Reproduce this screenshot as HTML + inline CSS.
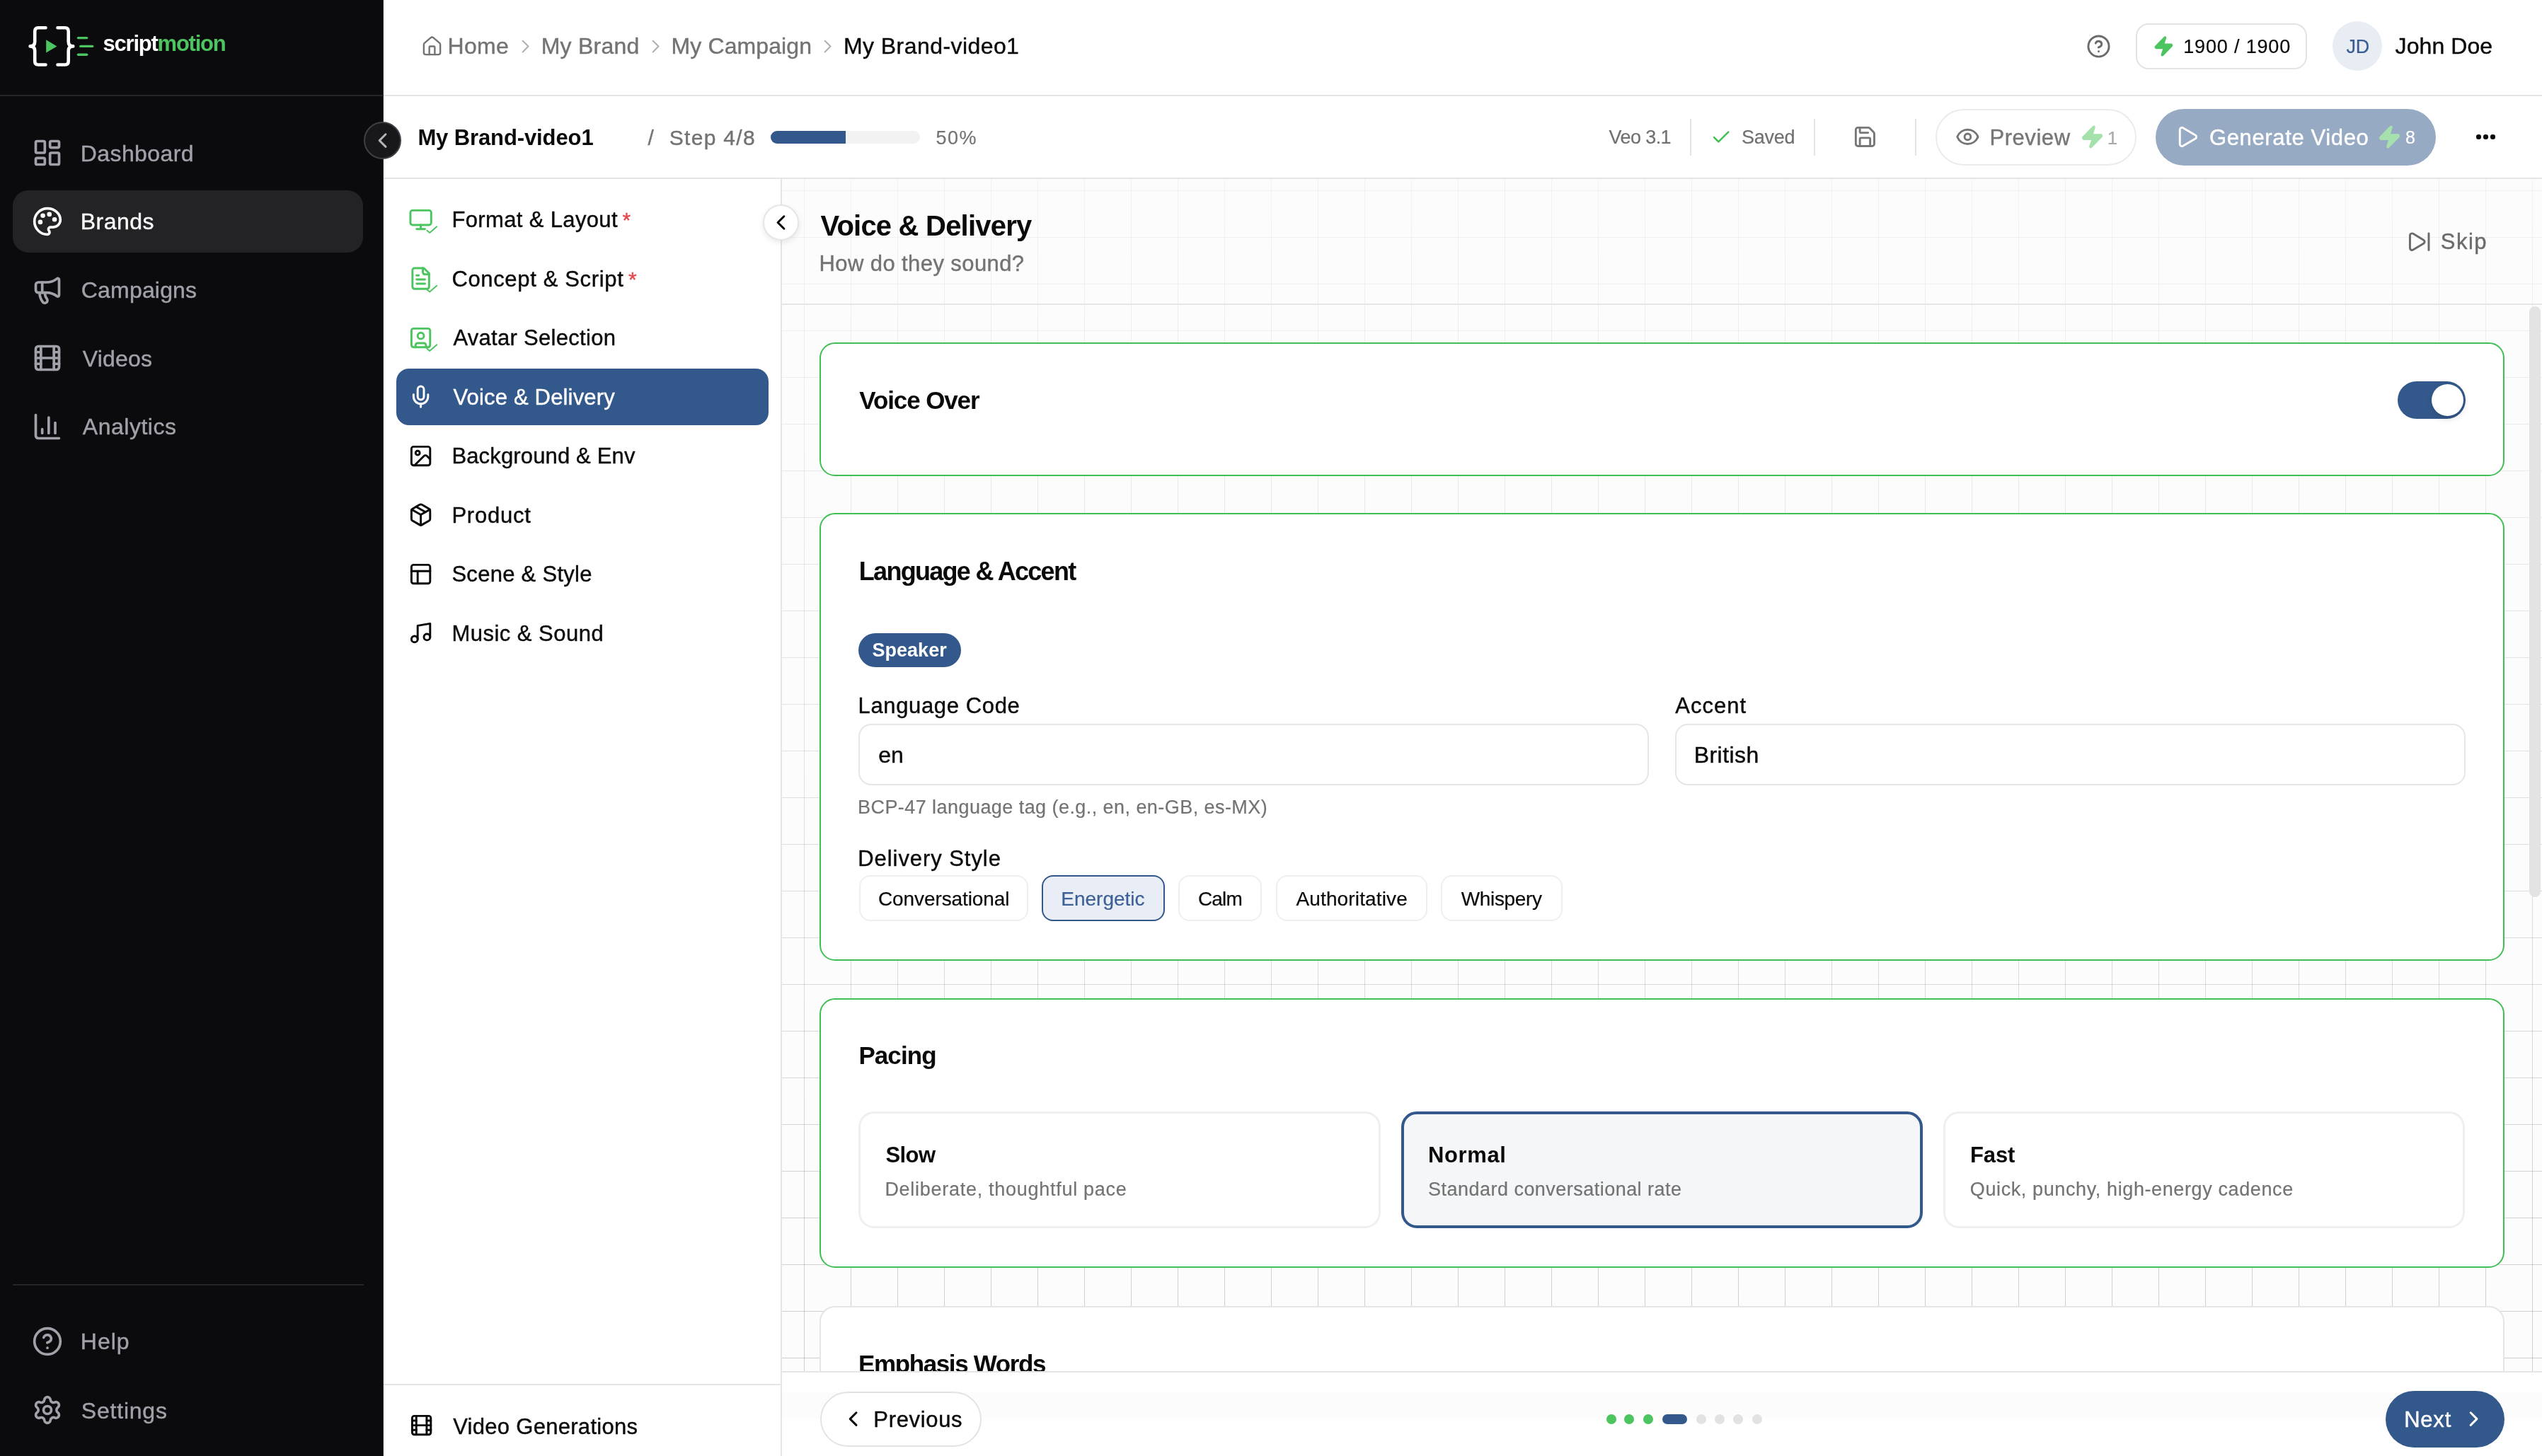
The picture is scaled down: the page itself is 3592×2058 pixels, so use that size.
<!DOCTYPE html>
<html><head><meta charset="utf-8"><style>
html,body{margin:0;padding:0;width:3592px;height:2058px;overflow:hidden;background:#fff;}
body{position:relative;font-family:"Liberation Sans",sans-serif;will-change:transform;}
.t{position:absolute;line-height:1;white-space:nowrap;-webkit-text-stroke:0.4px currentColor;}
.t.s{-webkit-text-stroke:0.2px currentColor}
.t.b{-webkit-text-stroke:0}
svg{display:block}
</style></head><body>
<div style="position:absolute;left:0px;top:0px;width:542px;height:2058px;background:#0b0b0d"></div>
<div style="position:absolute;left:0px;top:134px;width:542px;height:2px;background:#26262a"></div>
<div style="position:absolute;left:541px;top:0px;width:1px;height:2058px;background:#2e2e33"></div>
<svg style="position:absolute;left:0;top:0" width="340" height="120" viewBox="0 0 340 120">
<g fill="none" stroke="#fff" stroke-width="4.6" stroke-linecap="round" stroke-linejoin="round">
<path d="M64.5 39.3 H54 Q49.2 39.3 49.2 44.5 V59 Q49.2 65.4 42.6 65.4 Q49.2 65.4 49.2 71.8 V86.3 Q49.2 91.5 54 91.5 H64.5"/>
<path d="M81.5 39.3 H92 Q96.7 39.3 96.7 44.5 V59 Q96.7 65.4 103.3 65.4 Q96.7 65.4 96.7 71.8 V86.3 Q96.7 91.5 92 91.5 H81.5"/>
</g>
<path d="M65.2 56.3 L80.5 65.4 L65.2 74.6 Z" fill="#4cc45f"/>
<g stroke="#4cc45f" stroke-width="3.4" stroke-linecap="round">
<path d="M110.5 53.6 H122.7"/><path d="M113.7 65.4 H130.7"/><path d="M110.5 77.2 H122.7"/>
</g></svg>
<div class="t b" style="left:145.6px;top:46px;font-size:31px;color:#ffffff;font-weight:700;letter-spacing:-1.24px;">script<span style="color:#4cc45f">motion</span></div>
<div style="position:absolute;left:18px;top:269px;width:495px;height:88px;background:#232325;border-radius:22px"></div>
<svg style="position:absolute;left:45px;top:194.0px;overflow:visible;color:#a1a1aa;" width="44" height="44" viewBox="0 0 24 24" fill="none" stroke="#a1a1aa" stroke-width="2" stroke-linecap="round" stroke-linejoin="round"><rect width="7" height="9" x="3" y="3" rx="1"/><rect width="7" height="5" x="14" y="3" rx="1"/><rect width="7" height="9" x="14" y="12" rx="1"/><rect width="7" height="5" x="3" y="16" rx="1"/></svg>
<div class="t" style="left:113.8px;top:201px;font-size:32px;color:#a1a1aa;letter-spacing:0.40px;">Dashboard</div>
<svg style="position:absolute;left:45px;top:290.8px;overflow:visible;color:#fafafa;" width="44" height="44" viewBox="0 0 24 24" fill="none" stroke="#fafafa" stroke-width="2" stroke-linecap="round" stroke-linejoin="round"><circle cx="13.5" cy="6.5" r=".8" fill="currentColor"/><circle cx="17.5" cy="10.5" r=".8" fill="currentColor"/><circle cx="8.5" cy="7.5" r=".8" fill="currentColor"/><circle cx="6.5" cy="12.5" r=".8" fill="currentColor"/><path d="M12 2C6.5 2 2 6.5 2 12s4.5 10 10 10c.926 0 1.648-.746 1.648-1.688 0-.437-.18-.835-.437-1.125-.29-.289-.438-.652-.438-1.125a1.64 1.64 0 0 1 1.668-1.668h1.996c3.051 0 5.555-2.503 5.555-5.554C21.965 6.012 17.461 2 12 2z"/></svg>
<div class="t" style="left:113.8px;top:297px;font-size:32px;color:#fafafa;letter-spacing:0.46px;">Brands</div>
<svg style="position:absolute;left:45px;top:387.5px;overflow:visible;color:#a1a1aa;" width="44" height="44" viewBox="0 0 24 24" fill="none" stroke="#a1a1aa" stroke-width="2" stroke-linecap="round" stroke-linejoin="round"><path d="M11 6a13 13 0 0 0 8.4-2.8A1 1 0 0 1 21 4v12a1 1 0 0 1-1.6.8A13 13 0 0 0 11 14H5a2 2 0 0 1-2-2V8a2 2 0 0 1 2-2z"/><path d="M6 14a12 12 0 0 0 2.4 7.2 2 2 0 0 0 3.2-2.4A8 8 0 0 1 10 14"/><path d="M8 6v8"/></svg>
<div class="t" style="left:114.8px;top:394px;font-size:32px;color:#a1a1aa;letter-spacing:0.18px;">Campaigns</div>
<svg style="position:absolute;left:45px;top:484.2px;overflow:visible;color:#a1a1aa;" width="44" height="44" viewBox="0 0 24 24" fill="none" stroke="#a1a1aa" stroke-width="2" stroke-linecap="round" stroke-linejoin="round"><rect width="18" height="18" x="3" y="3" rx="2"/><path d="M7 3v18"/><path d="M3 7.5h4"/><path d="M3 12h18"/><path d="M3 16.5h4"/><path d="M17 3v18"/><path d="M17 7.5h4"/><path d="M17 16.5h4"/></svg>
<div class="t" style="left:116.8px;top:491px;font-size:32px;color:#a1a1aa;letter-spacing:0.18px;">Videos</div>
<svg style="position:absolute;left:45px;top:581.0px;overflow:visible;color:#a1a1aa;" width="44" height="44" viewBox="0 0 24 24" fill="none" stroke="#a1a1aa" stroke-width="2" stroke-linecap="round" stroke-linejoin="round"><path d="M3 3v16a2 2 0 0 0 2 2h16"/><path d="M18 17V9"/><path d="M13 17V5"/><path d="M8 17v-3"/></svg>
<div class="t" style="left:116.8px;top:587px;font-size:32px;color:#a1a1aa;letter-spacing:0.51px;">Analytics</div>
<div style="position:absolute;left:18px;top:1815px;width:496px;height:2px;background:#26262a"></div>
<svg style="position:absolute;left:45px;top:1874px;overflow:visible;color:#a1a1aa;" width="44" height="44" viewBox="0 0 24 24" fill="none" stroke="#a1a1aa" stroke-width="2" stroke-linecap="round" stroke-linejoin="round"><circle cx="12" cy="12" r="10"/><path d="M9.09 9a3 3 0 0 1 5.83 1c0 2-3 3-3 3"/><path d="M12 17h.01"/></svg>
<div class="t" style="left:113.8px;top:1880px;font-size:32px;color:#a1a1aa;letter-spacing:1.00px;">Help</div>
<svg style="position:absolute;left:45px;top:1971px;overflow:visible;color:#a1a1aa;" width="44" height="44" viewBox="0 0 24 24" fill="none" stroke="#a1a1aa" stroke-width="2" stroke-linecap="round" stroke-linejoin="round"><path d="M9.671 4.136a2.34 2.34 0 0 1 4.659 0 2.34 2.34 0 0 0 3.319 1.915 2.34 2.34 0 0 1 2.33 4.033 2.34 2.34 0 0 0 0 3.831 2.34 2.34 0 0 1-2.33 4.033 2.34 2.34 0 0 0-3.319 1.915 2.34 2.34 0 0 1-4.659 0 2.34 2.34 0 0 0-3.32-1.915 2.34 2.34 0 0 1-2.33-4.033 2.34 2.34 0 0 0 0-3.831A2.34 2.34 0 0 1 6.35 6.051a2.34 2.34 0 0 0 3.319-1.915"/><circle cx="12" cy="12" r="3"/></svg>
<div class="t" style="left:114.8px;top:1978px;font-size:32px;color:#a1a1aa;letter-spacing:0.79px;">Settings</div>
<div style="position:absolute;left:542px;top:0px;width:3050px;height:134px;background:#fff"></div>
<div style="position:absolute;left:542px;top:134px;width:3050px;height:2px;background:#e5e5e5"></div>
<svg style="position:absolute;left:594.8px;top:50.2px;overflow:visible;color:#737373;" width="31" height="31" viewBox="0 0 24 24" fill="none" stroke="#737373" stroke-width="1.85" stroke-linecap="round" stroke-linejoin="round"><path d="M15 21v-8a1 1 0 0 0-1-1h-4a1 1 0 0 0-1 1v8"/><path d="M3 10a2 2 0 0 1 .709-1.528l7-5.999a2 2 0 0 1 2.582 0l7 5.999A2 2 0 0 1 21 10v9a2 2 0 0 1-2 2H5a2 2 0 0 1-2-2z"/></svg>
<div class="t" style="left:632.5px;top:49px;font-size:32px;color:#737373;letter-spacing:0.33px;">Home</div>
<svg style="position:absolute;left:726.65px;top:49.75px;overflow:visible;color:#b0b0b0;" width="31.2" height="31.2" viewBox="0 0 24 24" fill="none" stroke="#b0b0b0" stroke-width="1.6" stroke-linecap="round" stroke-linejoin="round"><path d="m9 18 6-6-6-6"/></svg>
<div class="t" style="left:764.7px;top:49px;font-size:32px;color:#737373;letter-spacing:0.24px;">My Brand</div>
<svg style="position:absolute;left:911.3px;top:49.75px;overflow:visible;color:#b0b0b0;" width="31.2" height="31.2" viewBox="0 0 24 24" fill="none" stroke="#b0b0b0" stroke-width="1.6" stroke-linecap="round" stroke-linejoin="round"><path d="m9 18 6-6-6-6"/></svg>
<div class="t" style="left:948.6px;top:49px;font-size:32px;color:#737373;letter-spacing:0.10px;">My Campaign</div>
<svg style="position:absolute;left:1153.9px;top:49.75px;overflow:visible;color:#b0b0b0;" width="31.2" height="31.2" viewBox="0 0 24 24" fill="none" stroke="#b0b0b0" stroke-width="1.6" stroke-linecap="round" stroke-linejoin="round"><path d="m9 18 6-6-6-6"/></svg>
<div class="t" style="left:1192.0px;top:49px;font-size:32px;color:#0a0a0a;letter-spacing:0.43px;">My Brand-video1</div>
<svg style="position:absolute;left:2948px;top:48px;overflow:visible;color:#6b6b6b;" width="35" height="35" viewBox="0 0 24 24" fill="none" stroke="#6b6b6b" stroke-width="2" stroke-linecap="round" stroke-linejoin="round"><circle cx="12" cy="12" r="10"/><path d="M9.09 9a3 3 0 0 1 5.83 1c0 2-3 3-3 3"/><path d="M12 17h.01"/></svg>
<div style="position:absolute;left:3018px;top:33px;width:242px;height:65px;border:2px solid #e3e3e3;border-radius:18px;box-sizing:border-box;background:#fff"></div>
<svg style="position:absolute;left:3042.2px;top:50.2px;overflow:visible;color:#4cc45f;" width="30.8" height="30.8" viewBox="0 0 24 24" fill="#4cc45f" stroke="#4cc45f" stroke-width="2" stroke-linecap="round" stroke-linejoin="round"><path d="M4 14a1 1 0 0 1-.78-1.63l9.9-10.2a.5.5 0 0 1 .86.46l-1.92 6.02A1 1 0 0 0 13 10h7a1 1 0 0 1 .78 1.63l-9.9 10.2a.5.5 0 0 1-.86-.46l1.92-6.02A1 1 0 0 0 11 14z"/></svg>
<div class="t s" style="left:3085.2px;top:53px;font-size:27px;color:#0a0a0a;letter-spacing:0.84px;">1900 / 1900</div>
<div style="position:absolute;left:3296px;top:30px;width:70px;height:70px;border-radius:50%;background:#e8ecf3"></div>
<div class="t s" style="left:3315.4px;top:53px;font-size:27px;color:#3b5d92;letter-spacing:-0.20px;">JD</div>
<div class="t" style="left:3384.6px;top:49px;font-size:32px;color:#0a0a0a;letter-spacing:0.07px;">John Doe</div>
<div style="position:absolute;left:542px;top:136px;width:3050px;height:115px;background:#fff"></div>
<div style="position:absolute;left:542px;top:251px;width:3050px;height:2px;background:#e5e5e5"></div>
<div class="t b" style="left:590.4px;top:179px;font-size:31px;color:#0a0a0a;font-weight:700;letter-spacing:-0.11px;">My Brand-video1</div>
<div class="t" style="left:915.4px;top:180px;font-size:30px;color:#757575;">/</div>
<div class="t" style="left:945.8px;top:180px;font-size:30px;color:#737373;letter-spacing:1.29px;">Step 4/8</div>
<div style="position:absolute;left:1089px;top:185px;width:211px;height:18px;background:#f2f2f2;border-radius:9px"></div>
<div style="position:absolute;left:1089px;top:185px;width:105.5px;height:18px;background:#33598c;border-radius:9px 0 0 9px"></div>
<div class="t s" style="left:1322.6px;top:182px;font-size:27px;color:#737373;letter-spacing:1.40px;">50%</div>
<div class="t s" style="left:2273.5px;top:181px;font-size:27px;color:#707070;letter-spacing:-0.58px;">Veo 3.1</div>
<div style="position:absolute;left:2388px;top:168px;width:2px;height:52px;background:#e5e5e5"></div>
<svg style="position:absolute;left:2417.2px;top:179.3px;overflow:visible;color:#40bf55;" width="30.3" height="30.3" viewBox="0 0 24 24" fill="none" stroke="#40bf55" stroke-width="2" stroke-linecap="round" stroke-linejoin="round"><path d="M20 6 9 17l-5-5"/></svg>
<div class="t s" style="left:2461.0px;top:181px;font-size:27px;color:#707070;letter-spacing:-0.25px;">Saved</div>
<div style="position:absolute;left:2563px;top:168px;width:2px;height:52px;background:#e5e5e5"></div>
<svg style="position:absolute;left:2618.1px;top:176.1px;overflow:visible;color:#777777;" width="34.8" height="34.8" viewBox="0 0 24 24" fill="none" stroke="#777777" stroke-width="2" stroke-linecap="round" stroke-linejoin="round"><path d="M15.2 3a2 2 0 0 1 1.4.6l3.8 3.8a2 2 0 0 1 .6 1.4V19a2 2 0 0 1-2 2H5a2 2 0 0 1-2-2V5a2 2 0 0 1 2-2z"/><path d="M17 21v-7a1 1 0 0 0-1-1H8a1 1 0 0 0-1 1v7"/><path d="M7 3v4a1 1 0 0 0 1 1h7"/></svg>
<div style="position:absolute;left:2706px;top:168px;width:2px;height:52px;background:#e5e5e5"></div>
<div style="position:absolute;left:2735px;top:154px;width:284px;height:80px;border:2px solid #ebebeb;border-radius:40px;box-sizing:border-box;background:#fff"></div>
<svg style="position:absolute;left:2763.3px;top:176.4px;overflow:visible;color:#757575;" width="34.8" height="34.8" viewBox="0 0 24 24" fill="none" stroke="#757575" stroke-width="2" stroke-linecap="round" stroke-linejoin="round"><path d="M2.062 12.348a1 1 0 0 1 0-.696 10.75 10.75 0 0 1 19.876 0 1 1 0 0 1 0 .696 10.75 10.75 0 0 1-19.876 0"/><circle cx="12" cy="12" r="3"/></svg>
<div class="t" style="left:2811.4px;top:179px;font-size:31px;color:#767676;letter-spacing:0.57px;">Preview</div>
<svg style="position:absolute;left:2939px;top:176px;overflow:visible;color:#a4e1ab;" width="35" height="35" viewBox="0 0 24 24" fill="#a4e1ab" stroke="#a4e1ab" stroke-width="2" stroke-linecap="round" stroke-linejoin="round"><path d="M4 14a1 1 0 0 1-.78-1.63l9.9-10.2a.5.5 0 0 1 .86.46l-1.92 6.02A1 1 0 0 0 13 10h7a1 1 0 0 1 .78 1.63l-9.9 10.2a.5.5 0 0 1-.86-.46l1.92-6.02A1 1 0 0 0 11 14z"/></svg>
<div class="t s" style="left:2977.8px;top:182px;font-size:26px;color:#a9a9a9;">1</div>
<div style="position:absolute;left:3046px;top:154px;width:396px;height:80px;background:#97aac4;border-radius:40px"></div>
<svg style="position:absolute;left:3072.7px;top:176px;overflow:visible;color:#ffffff;" width="35" height="35" viewBox="0 0 24 24" fill="none" stroke="#ffffff" stroke-width="2" stroke-linecap="round" stroke-linejoin="round"><path d="M5 5a2 2 0 0 1 3.008-1.728l11.997 6.998a2 2 0 0 1 .003 3.458l-12 7A2 2 0 0 1 5 19z"/></svg>
<div class="t" style="left:3121.9px;top:179px;font-size:31px;color:#ffffff;letter-spacing:0.64px;">Generate Video</div>
<svg style="position:absolute;left:3359.2px;top:176px;overflow:visible;color:#a5e0ad;" width="35" height="35" viewBox="0 0 24 24" fill="#a5e0ad" stroke="#a5e0ad" stroke-width="2" stroke-linecap="round" stroke-linejoin="round"><path d="M4 14a1 1 0 0 1-.78-1.63l9.9-10.2a.5.5 0 0 1 .86.46l-1.92 6.02A1 1 0 0 0 13 10h7a1 1 0 0 1 .78 1.63l-9.9 10.2a.5.5 0 0 1-.86-.46l1.92-6.02A1 1 0 0 0 11 14z"/></svg>
<div class="t s" style="left:3399.0px;top:182px;font-size:25px;color:#ffffff;">8</div>
<div style="position:absolute;left:3499.2px;top:190.29999999999998px;width:6.600000000000364px;height:6.600000000000023px;background:#0a0a0a;border-radius:50%"></div>
<div style="position:absolute;left:3509.2999999999997px;top:190.29999999999998px;width:6.600000000000364px;height:6.600000000000023px;background:#0a0a0a;border-radius:50%"></div>
<div style="position:absolute;left:3519.3999999999996px;top:190.29999999999998px;width:6.600000000000364px;height:6.600000000000023px;background:#0a0a0a;border-radius:50%"></div>
<div style="position:absolute;left:542px;top:253px;width:561px;height:1805px;background:#fff"></div>
<div style="position:absolute;left:1103px;top:253px;width:2px;height:1805px;background:#e5e5e5"></div>
<div style="position:absolute;left:560px;top:521px;width:526px;height:80px;background:#33598c;border-radius:18px"></div>
<svg style="position:absolute;left:577.4px;top:292.8px;overflow:visible;color:#4cc45f;" width="35.2" height="35.2" viewBox="0 0 24 24" fill="none" stroke="#4cc45f" stroke-width="2" stroke-linecap="round" stroke-linejoin="round"><rect width="20" height="14" x="2" y="3" rx="2"/><path d="M8 21h8"/><path d="M12 17v4"/></svg>
<svg style="position:absolute;left:0;top:0;overflow:visible" width="1" height="1"><polyline points="603.3,325.7 607.2,329.0 617.3,320.3" fill="none" stroke="#4cc45f" stroke-width="1.9" stroke-linecap="round" stroke-linejoin="round"/></svg>
<div class="t" style="left:638.4px;top:295px;font-size:31px;color:#0a0a0a;letter-spacing:0.36px;">Format &amp; Layout</div>
<div class="t" style="left:879.4px;top:296px;font-size:30px;color:#e5484d;">*</div>
<svg style="position:absolute;left:577.4px;top:376.3px;overflow:visible;color:#4cc45f;" width="35.2" height="35.2" viewBox="0 0 24 24" fill="none" stroke="#4cc45f" stroke-width="2" stroke-linecap="round" stroke-linejoin="round"><path d="M15 2H6a2 2 0 0 0-2 2v16a2 2 0 0 0 2 2h12a2 2 0 0 0 2-2V7Z"/><path d="M14 2v4a2 2 0 0 0 2 2h4"/><path d="M10 9H8"/><path d="M16 13H8"/><path d="M16 17H8"/></svg>
<svg style="position:absolute;left:0;top:0;overflow:visible" width="1" height="1"><polyline points="603.3,409.2 607.2,412.5 617.3,403.8" fill="none" stroke="#4cc45f" stroke-width="1.9" stroke-linecap="round" stroke-linejoin="round"/></svg>
<div class="t" style="left:638.4px;top:379px;font-size:31px;color:#0a0a0a;letter-spacing:0.65px;">Concept &amp; Script</div>
<div class="t" style="left:888.1px;top:380px;font-size:30px;color:#e5484d;">*</div>
<svg style="position:absolute;left:577.4px;top:459.8px;overflow:visible;color:#4cc45f;" width="35.2" height="35.2" viewBox="0 0 24 24" fill="none" stroke="#4cc45f" stroke-width="2" stroke-linecap="round" stroke-linejoin="round"><rect width="18" height="18" x="3" y="3" rx="2"/><circle cx="12" cy="10" r="3"/><path d="M7 21v-2a2 2 0 0 1 2-2h6a2 2 0 0 1 2 2v2"/></svg>
<svg style="position:absolute;left:0;top:0;overflow:visible" width="1" height="1"><polyline points="603.3,492.7 607.2,496.0 617.3,487.3" fill="none" stroke="#4cc45f" stroke-width="1.9" stroke-linecap="round" stroke-linejoin="round"/></svg>
<div class="t" style="left:640.4px;top:462px;font-size:31px;color:#0a0a0a;letter-spacing:0.29px;">Avatar Selection</div>
<svg style="position:absolute;left:577.4px;top:543.3px;overflow:visible;color:#ffffff;" width="35.2" height="35.2" viewBox="0 0 24 24" fill="none" stroke="#ffffff" stroke-width="2" stroke-linecap="round" stroke-linejoin="round"><path d="M12 19v3"/><path d="M19 10v2a7 7 0 0 1-14 0v-2"/><rect x="9" y="2" width="6" height="13" rx="3"/></svg>
<div class="t" style="left:640.4px;top:546px;font-size:31px;color:#ffffff;letter-spacing:0.18px;">Voice &amp; Delivery</div>
<svg style="position:absolute;left:577.4px;top:626.8px;overflow:visible;color:#0a0a0a;" width="35.2" height="35.2" viewBox="0 0 24 24" fill="none" stroke="#0a0a0a" stroke-width="2" stroke-linecap="round" stroke-linejoin="round"><rect width="18" height="18" x="3" y="3" rx="2" ry="2"/><circle cx="9" cy="9" r="2"/><path d="m21 15-3.086-3.086a2 2 0 0 0-2.828 0L6 21"/></svg>
<div class="t" style="left:638.4px;top:629px;font-size:31px;color:#0a0a0a;letter-spacing:0.15px;">Background &amp; Env</div>
<svg style="position:absolute;left:577.4px;top:710.2px;overflow:visible;color:#0a0a0a;" width="35.2" height="35.2" viewBox="0 0 24 24" fill="none" stroke="#0a0a0a" stroke-width="2" stroke-linecap="round" stroke-linejoin="round"><path d="M11 21.73a2 2 0 0 0 2 0l7-4A2 2 0 0 0 21 16V8a2 2 0 0 0-1-1.73l-7-4a2 2 0 0 0-2 0l-7 4A2 2 0 0 0 3 8v8a2 2 0 0 0 1 1.73z"/><path d="M12 22V12"/><polyline points="3.29 7 12 12 20.71 7"/><path d="m7.5 4.27 9 5.15"/></svg>
<div class="t" style="left:638.4px;top:713px;font-size:31px;color:#0a0a0a;letter-spacing:0.78px;">Product</div>
<svg style="position:absolute;left:577.4px;top:793.7px;overflow:visible;color:#0a0a0a;" width="35.2" height="35.2" viewBox="0 0 24 24" fill="none" stroke="#0a0a0a" stroke-width="2" stroke-linecap="round" stroke-linejoin="round"><rect width="18" height="18" x="3" y="3" rx="2"/><path d="M3 9h18"/><path d="M9 21V9"/></svg>
<div class="t" style="left:638.4px;top:796px;font-size:31px;color:#0a0a0a;letter-spacing:0.28px;">Scene &amp; Style</div>
<svg style="position:absolute;left:577.4px;top:877.2px;overflow:visible;color:#0a0a0a;" width="35.2" height="35.2" viewBox="0 0 24 24" fill="none" stroke="#0a0a0a" stroke-width="2" stroke-linecap="round" stroke-linejoin="round"><path d="M9 18V5l12-2v13"/><circle cx="6" cy="18" r="3"/><circle cx="18" cy="16" r="3"/></svg>
<div class="t" style="left:638.4px;top:880px;font-size:31px;color:#0a0a0a;letter-spacing:0.48px;">Music &amp; Sound</div>
<div style="position:absolute;left:542px;top:1956px;width:561px;height:2px;background:#e5e5e5"></div>
<svg style="position:absolute;left:577.5px;top:1997.1px;overflow:visible;color:#0a0a0a;" width="35.2" height="35.2" viewBox="0 0 24 24" fill="none" stroke="#0a0a0a" stroke-width="2" stroke-linecap="round" stroke-linejoin="round"><rect width="18" height="18" x="3" y="3" rx="2"/><path d="M7 3v18"/><path d="M3 7.5h4"/><path d="M3 12h18"/><path d="M3 16.5h4"/><path d="M17 3v18"/><path d="M17 7.5h4"/><path d="M17 16.5h4"/></svg>
<div class="t" style="left:640.2px;top:2001px;font-size:31px;color:#0a0a0a;letter-spacing:0.29px;">Video Generations</div>
<div style="position:absolute;left:514px;top:172px;width:53px;height:53px;border-radius:50%;background:#18181b;border:2px solid #3f3f46;box-sizing:border-box"></div>
<svg style="position:absolute;left:522.9px;top:181.2px;overflow:visible;color:#b4b4bc;" width="35.2" height="35.2" viewBox="0 0 24 24" fill="none" stroke="#b4b4bc" stroke-width="2" stroke-linecap="round" stroke-linejoin="round"><path d="m15 18-6-6 6-6"/></svg>
<div style="position:absolute;left:1105px;top:253px;width:2487px;height:1685px;background:#fcfcfc"></div>
<div style="position:absolute;left:1105px;top:253px;width:2487px;height:1685px;background-image:linear-gradient(to right,rgba(0,0,0,.18) 0,rgba(0,0,0,.18) 1px,transparent 1px),linear-gradient(to bottom,rgba(0,0,0,.18) 0,rgba(0,0,0,.18) 1px,transparent 1px);background-size:66px 66px;background-position:31px 16px;-webkit-mask-image:linear-gradient(to bottom,rgba(0,0,0,.2),rgba(0,0,0,1));mask-image:linear-gradient(to bottom,rgba(0,0,0,.2),rgba(0,0,0,1))"></div>
<div style="position:absolute;left:1105px;top:429px;width:2487px;height:2px;background:#e5e5e5"></div>
<div class="t b" style="left:1159.5px;top:299px;font-size:40px;color:#0a0a0a;font-weight:700;letter-spacing:-0.79px;">Voice &amp; Delivery</div>
<div class="t" style="left:1157.5px;top:357px;font-size:31px;color:#737373;letter-spacing:0.41px;">How do they sound?</div>
<svg style="position:absolute;left:3401px;top:324.4px;overflow:visible;color:#6b6b6b;" width="35.4" height="35.4" viewBox="0 0 24 24" fill="none" stroke="#6b6b6b" stroke-width="2" stroke-linecap="round" stroke-linejoin="round"><path d="M21 4v16"/><path d="M6.029 4.285A2 2 0 0 0 3 6v12a2 2 0 0 0 3.029 1.715l9.997-5.998a2 2 0 0 0 .003-3.432z"/></svg>
<div class="t" style="left:3448.8px;top:326px;font-size:31px;color:#6b6b6b;letter-spacing:1.50px;">Skip</div>
<div style="position:absolute;left:3574px;top:433px;width:16px;height:835px;background:#e3e3e3;border-radius:8px"></div>
<div style="position:absolute;left:1158px;top:484px;width:2381px;height:189px;background:#fff;border:2px solid #40bf55;border-radius:22px;box-sizing:border-box"></div>
<div class="t b" style="left:1214.3px;top:548px;font-size:35px;color:#0a0a0a;font-weight:700;letter-spacing:-1.11px;">Voice Over</div>
<div style="position:absolute;left:3388px;top:539px;width:96px;height:53px;background:#33598c;border-radius:27px"></div>
<div style="position:absolute;left:3436px;top:543px;width:45px;height:45px;background:#fff;border-radius:50%;box-shadow:0 4px 10px rgba(0,0,0,.15)"></div>
<div style="position:absolute;left:1158px;top:725px;width:2381px;height:633px;background:#fff;border:2px solid #40bf55;border-radius:22px;box-sizing:border-box"></div>
<div class="t b" style="left:1213.8px;top:790px;font-size:36px;color:#0a0a0a;font-weight:700;letter-spacing:-1.71px;">Language &amp; Accent</div>
<div style="position:absolute;left:1213px;top:895px;width:145px;height:48px;background:#33598c;border-radius:24px"></div>
<div class="t b" style="left:1232.5px;top:906px;font-size:27px;color:#ffffff;font-weight:700;letter-spacing:0.02px;">Speaker</div>
<div class="t" style="left:1212.6px;top:982px;font-size:31px;color:#0a0a0a;letter-spacing:0.63px;">Language Code</div>
<div style="position:absolute;left:1212.5px;top:1022.5px;width:1117.5px;height:87.5px;background:#fff;border:2px solid #e6e6e6;border-radius:18px;box-sizing:border-box"></div>
<div class="t" style="left:1241.3px;top:1051px;font-size:32px;color:#0a0a0a;">en</div>
<div class="t" style="left:2367.3px;top:982px;font-size:31px;color:#0a0a0a;letter-spacing:1.02px;">Accent</div>
<div style="position:absolute;left:2366.5px;top:1022.5px;width:1117.5px;height:87.5px;background:#fff;border:2px solid #e6e6e6;border-radius:18px;box-sizing:border-box"></div>
<div class="t" style="left:2393.7px;top:1051px;font-size:32px;color:#0a0a0a;letter-spacing:0.45px;">British</div>
<div class="t s" style="left:1212.0px;top:1128px;font-size:27px;color:#737373;letter-spacing:0.44px;">BCP-47 language tag (e.g., en, en-GB, es-MX)</div>
<div class="t" style="left:1212.3px;top:1198px;font-size:31px;color:#0a0a0a;letter-spacing:0.93px;">Delivery Style</div>
<div style="position:absolute;left:1213.6px;top:1237px;width:239.30000000000018px;height:65px;background:#fff;border:2px solid #efefef;border-radius:16px;box-sizing:border-box"></div>
<div class="t s" style="left:1241.0px;top:1257px;font-size:28px;color:#0a0a0a;letter-spacing:-0.10px;">Conversational</div>
<div style="position:absolute;left:1472.3px;top:1237px;width:174.0px;height:65px;background:#e9edf5;border:2px solid #33598c;border-radius:16px;box-sizing:border-box"></div>
<div class="t s" style="left:1499.3px;top:1257px;font-size:28px;color:#3d6096;">Energetic</div>
<div style="position:absolute;left:1664.9px;top:1237px;width:118.5px;height:65px;background:#fff;border:2px solid #efefef;border-radius:16px;box-sizing:border-box"></div>
<div class="t s" style="left:1692.9px;top:1257px;font-size:28px;color:#0a0a0a;letter-spacing:-0.83px;">Calm</div>
<div style="position:absolute;left:1802.9px;top:1237px;width:214.19999999999982px;height:65px;background:#fff;border:2px solid #efefef;border-radius:16px;box-sizing:border-box"></div>
<div class="t s" style="left:1831.5px;top:1257px;font-size:28px;color:#0a0a0a;letter-spacing:0.13px;">Authoritative</div>
<div style="position:absolute;left:2035.7px;top:1237px;width:172.29999999999995px;height:65px;background:#fff;border:2px solid #efefef;border-radius:16px;box-sizing:border-box"></div>
<div class="t s" style="left:2064.7px;top:1257px;font-size:28px;color:#0a0a0a;letter-spacing:-0.33px;">Whispery</div>
<div style="position:absolute;left:1158px;top:1411px;width:2381px;height:381px;background:#fff;border:2px solid #40bf55;border-radius:22px;box-sizing:border-box"></div>
<div class="t b" style="left:1213.4px;top:1474px;font-size:35px;color:#0a0a0a;font-weight:700;letter-spacing:-0.92px;">Pacing</div>
<div style="position:absolute;left:1213px;top:1571px;width:738px;height:165px;background:#fff;border:3px solid #efefef;border-radius:22px;box-sizing:border-box"></div>
<div style="position:absolute;left:1979.5px;top:1571px;width:737.5px;height:165px;background:#f5f6f8;border:4px solid #33598c;border-radius:22px;box-sizing:border-box"></div>
<div style="position:absolute;left:2745.5px;top:1571px;width:737.5px;height:165px;background:#fff;border:3px solid #efefef;border-radius:22px;box-sizing:border-box"></div>
<div class="t b" style="left:1251.4px;top:1617px;font-size:31px;color:#0a0a0a;font-weight:700;letter-spacing:-0.57px;">Slow</div>
<div class="t s" style="left:1250.4px;top:1668px;font-size:27px;color:#737373;letter-spacing:0.72px;">Deliberate, thoughtful pace</div>
<div class="t b" style="left:2017.9px;top:1617px;font-size:31px;color:#0a0a0a;font-weight:700;letter-spacing:0.64px;">Normal</div>
<div class="t s" style="left:2018.1px;top:1668px;font-size:27px;color:#737373;letter-spacing:0.47px;">Standard conversational rate</div>
<div class="t b" style="left:2784.0px;top:1617px;font-size:31px;color:#0a0a0a;font-weight:700;letter-spacing:-0.13px;">Fast</div>
<div class="t s" style="left:2783.8px;top:1668px;font-size:27px;color:#737373;letter-spacing:0.61px;">Quick, punchy, high-energy cadence</div>
<div style="position:absolute;left:1158px;top:1846px;width:2381px;height:254px;background:#fff;border:2px solid #e5e5e5;border-radius:22px;box-sizing:border-box"></div>
<div class="t b" style="left:1213.0px;top:1910px;font-size:35px;color:#0a0a0a;font-weight:700;letter-spacing:-1.38px;">Emphasis Words</div>
<div style="position:absolute;left:1078px;top:288.5px;width:51px;height:51.0px;border-radius:50%;background:#fff;border:2px solid #e6e6e6;box-sizing:border-box;box-shadow:0 3px 8px rgba(0,0,0,.09)"></div>
<svg style="position:absolute;left:1086.2px;top:296.5px;overflow:visible;color:#0a0a0a;" width="35" height="35" viewBox="0 0 24 24" fill="none" stroke="#0a0a0a" stroke-width="2.1" stroke-linecap="round" stroke-linejoin="round"><path d="m15 18-6-6 6-6"/></svg>
<div style="position:absolute;left:1105px;top:1938px;width:2487px;height:120px;background:#fff;border-top:2px solid #e5e5e5;box-sizing:border-box"></div>
<div style="position:absolute;left:1105px;top:1968px;width:2487px;height:37px;background:#fcfcfc"></div>
<div style="position:absolute;left:1158.6px;top:1966.8px;width:228.80000000000018px;height:78.0px;background:#fff;border:2px solid #e3e3e3;border-radius:40px;box-sizing:border-box"></div>
<svg style="position:absolute;left:1187.5px;top:1988.1px;overflow:visible;color:#0a0a0a;" width="35.2" height="35.2" viewBox="0 0 24 24" fill="none" stroke="#0a0a0a" stroke-width="2" stroke-linecap="round" stroke-linejoin="round"><path d="m15 18-6-6 6-6"/></svg>
<div class="t" style="left:1234.3px;top:1991px;font-size:31px;color:#0a0a0a;letter-spacing:0.67px;">Previous</div>
<div style="position:absolute;left:2269.5px;top:1999px;width:14.0px;height:14px;background:#4cc45f;border-radius:50%"></div>
<div style="position:absolute;left:2295.4px;top:1999px;width:14.0px;height:14px;background:#4cc45f;border-radius:50%"></div>
<div style="position:absolute;left:2321.9px;top:1999px;width:14.0px;height:14px;background:#4cc45f;border-radius:50%"></div>
<div style="position:absolute;left:2349px;top:1999px;width:35px;height:14px;background:#33598c;border-radius:7px"></div>
<div style="position:absolute;left:2396.5px;top:1999px;width:14.0px;height:14px;background:#e2e2e2;border-radius:50%"></div>
<div style="position:absolute;left:2423px;top:1999px;width:14px;height:14px;background:#e2e2e2;border-radius:50%"></div>
<div style="position:absolute;left:2449.3px;top:1999px;width:14.0px;height:14px;background:#e2e2e2;border-radius:50%"></div>
<div style="position:absolute;left:2475.5px;top:1999px;width:14.0px;height:14px;background:#e2e2e2;border-radius:50%"></div>
<div style="position:absolute;left:3371px;top:1966px;width:168px;height:80px;background:#33598c;border-radius:40px"></div>
<div class="t" style="left:3397.2px;top:1991px;font-size:31px;color:#ffffff;letter-spacing:0.77px;">Next</div>
<svg style="position:absolute;left:3478.3px;top:1988.2px;overflow:visible;color:#ffffff;" width="35.2" height="35.2" viewBox="0 0 24 24" fill="none" stroke="#ffffff" stroke-width="2" stroke-linecap="round" stroke-linejoin="round"><path d="m9 18 6-6-6-6"/></svg>
</body></html>
